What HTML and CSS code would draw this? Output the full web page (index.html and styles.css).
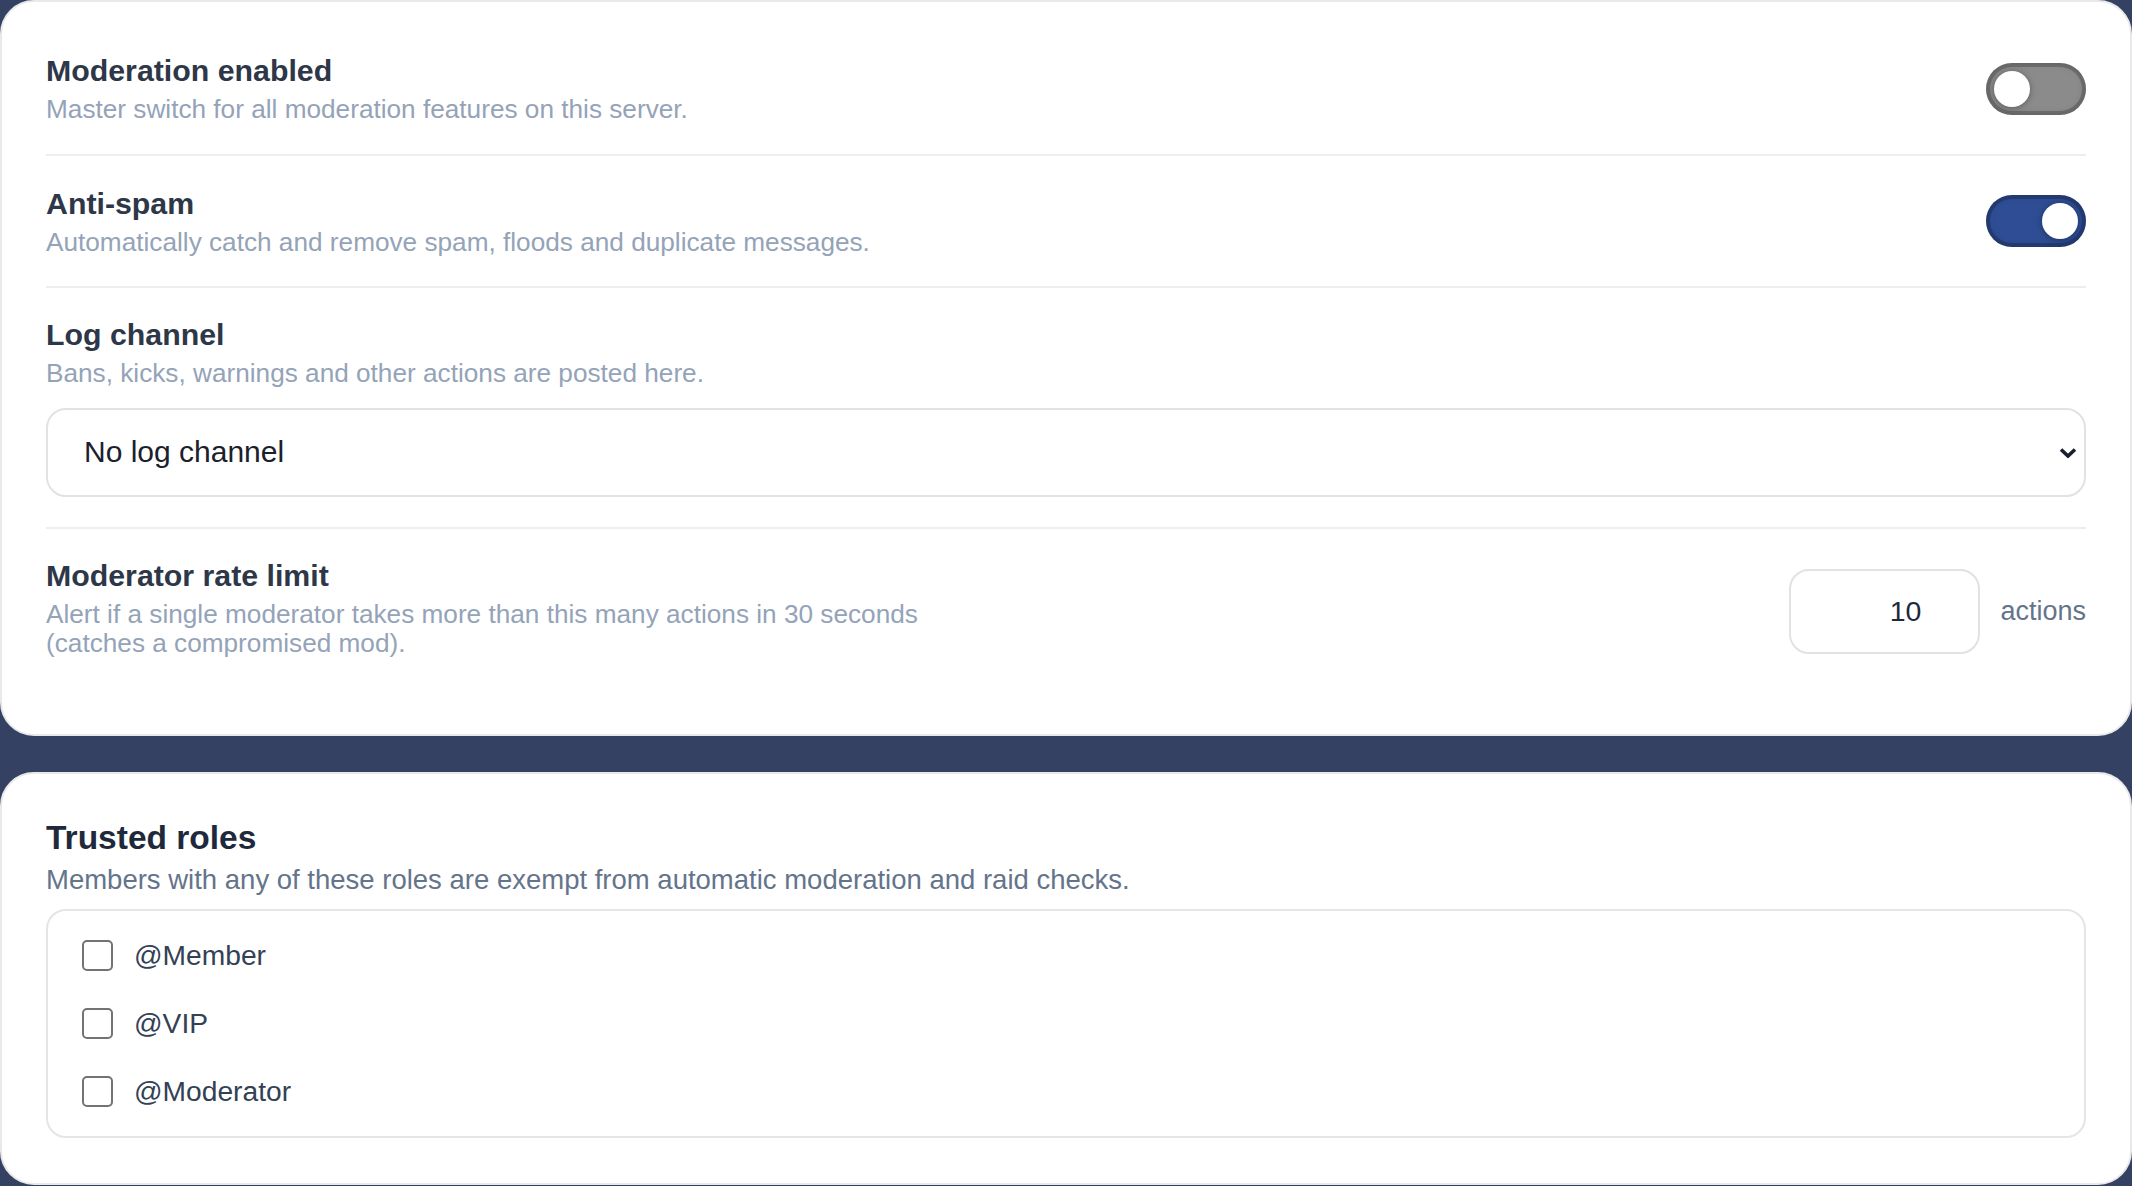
FILE: index.html
```html
<!DOCTYPE html>
<html lang="en">
<head>
    <meta charset="UTF-8">
    <meta name="viewport" content="width=device-width, initial-scale=1.0">
    <title>Moderation settings</title>
    <link rel="stylesheet" href="styles.css">
</head>
<body>
    <div class="card">
        <div class="setting">
            <div class="setting-text">
                <div class="setting-title">Moderation enabled</div>
                <div class="setting-desc">Master switch for all moderation features on this server.</div>
            </div>
            <button type="button" class="toggle" aria-pressed="false"><span class="knob"></span></button>
        </div>

        <div class="setting">
            <div class="setting-text">
                <div class="setting-title">Anti-spam</div>
                <div class="setting-desc">Automatically catch and remove spam, floods and duplicate messages.</div>
            </div>
            <button type="button" class="toggle on" aria-pressed="true"><span class="knob"></span></button>
        </div>

        <div class="setting stacked">
            <div class="setting-title">Log channel</div>
            <div class="setting-desc">Bans, kicks, warnings and other actions are posted here.</div>
            <div class="select-wrap">
                <select class="select" id="log-channel">
                    <option>No log channel</option>
                </select>
                <svg class="chevron" width="18" height="11" viewBox="0 0 18 11">
                    <polyline points="2,2 9,8.5 16,2" fill="none" stroke="#1a202c" stroke-width="3.6"/>
                </svg>
            </div>
        </div>

        <div class="setting rate-row">
            <div class="setting-text narrow">
                <div class="setting-title">Moderator rate limit</div>
                <div class="setting-desc">Alert if a single moderator takes more than this many actions in 30 seconds (catches a compromised mod).</div>
            </div>
            <div class="number-group">
                <input type="number" class="number" value="10" min="1">
                <span class="unit">actions</span>
            </div>
        </div>
    </div>

    <div class="card roles-card">
        <h2 class="card-title">Trusted roles</h2>
        <p class="card-desc">Members with any of these roles are exempt from automatic moderation and raid checks.</p>
        <div class="role-list">
            <label class="role"><input type="checkbox"><span>@Member</span></label>
            <label class="role"><input type="checkbox"><span>@VIP</span></label>
            <label class="role"><input type="checkbox"><span>@Moderator</span></label>
        </div>
    </div>

    <script>
        document.querySelectorAll('.toggle').forEach(function(btn) {
            btn.addEventListener('click', function() {
                btn.classList.toggle('on');
                btn.setAttribute('aria-pressed', btn.classList.contains('on'));
            });
        });
    </script>
</body>
</html>
```

FILE: styles.css
```css
html, body { margin: 0; padding: 0; }
body { font-family: "Liberation Sans", Arial, sans-serif; background: #354163; color: #2d3748; }

.card { background: #fff; border: 2px solid #e9e9e9; border-radius: 34px; padding: 21px 44px 45px; margin-bottom: 36px; }
.card:last-child { margin-bottom: 0; }
.roles-card { padding: 44px 44px 45px; }

.setting { display: flex; align-items: center; justify-content: space-between; gap: 40px; padding: 30px 0 29.5px; border-bottom: 2px solid #eeeeee; }
.setting:last-child { border-bottom: none; }
.setting.stacked { display: block; padding-top: 29px; }
.setting.rate-row { padding: 29px 0 31px; }
.setting-text.narrow { max-width: 940px; }
.setting-title { font-size: 30.3px; line-height: 36px; font-weight: 700; color: #2d3748; }
.setting-desc { font-size: 26.2px; line-height: 29px; color: #94a3b8; margin-top: 6px; }

.toggle { display: flex; justify-content: flex-start; flex-shrink: 0; width: 100px; height: 52px; padding: 8px; border: none; border-radius: 26px; background: #8b8b8b; box-shadow: inset 0 0 0 4px rgba(0,0,0,0.2), inset 0 0 8px rgba(0,0,0,0.15); cursor: pointer; box-sizing: border-box; }
.toggle.on { justify-content: flex-end; background: #2f4d94; }
.knob { display: block; width: 36px; height: 36px; border-radius: 50%; background: #fff; box-shadow: 0 1px 6px rgba(0,0,0,0.35); }

.select-wrap { position: relative; margin-top: 20px; }
.select { display: block; width: 100%; height: 89px; padding: 0 36px 3px; font-family: inherit; font-size: 30px; color: #1a202c; background: #fff; border: 2px solid #e2e2e2; border-radius: 20px; -webkit-appearance: none; appearance: none; box-sizing: border-box; outline: none; }
.chevron { position: absolute; right: 9px; top: 50%; transform: translateY(-50%); pointer-events: none; }

.number-group { display: flex; align-items: center; gap: 20px; flex-shrink: 0; margin-top: 7px; }
.number { width: 191px; height: 85px; padding: 0 57px 0 20px; box-sizing: border-box; font-family: inherit; font-size: 28.5px; color: #1e293b; text-align: right; border: 2px solid #e2e2e2; border-radius: 20px; outline: none; -moz-appearance: textfield; }
.number::-webkit-inner-spin-button, .number::-webkit-outer-spin-button { -webkit-appearance: none; margin: 0; }
.unit { font-size: 27px; color: #64748b; }

.card-title { margin: 0; font-size: 33.5px; line-height: 1.2; font-weight: 700; color: #1e293b; }
.card-desc { margin: 6px 0 0; font-size: 27.5px; line-height: 1.15; color: #64748b; }

.role-list { display: flex; flex-direction: column; gap: 29px; margin-top: 14px; padding: 25px 34px; border: 2px solid #e5e5e5; border-radius: 20px; }
.role { display: flex; align-items: center; gap: 21px; font-size: 28.2px; line-height: 39px; color: #334155; cursor: pointer; }
.role input { -webkit-appearance: none; appearance: none; width: 31px; height: 31px; margin: 0; border: 2px solid #737373; border-radius: 5px; background: #fff; box-sizing: border-box; }
.role input:checked { background: #2f4d94; border-color: #2f4d94; }
```
